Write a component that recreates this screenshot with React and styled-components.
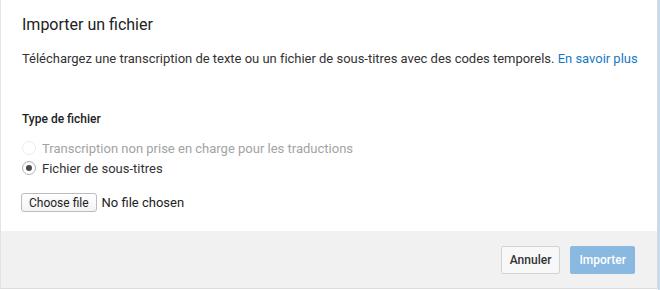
import React from 'react'
import styled, { createGlobalStyle } from 'styled-components'

const GlobalStyle = createGlobalStyle`
  html, body {
    margin: 0;
    padding: 0;
    background: #fff;
  }
  body {
    font-family: Roboto, "Liberation Sans", Arial, sans-serif;
    color: #333;
  }
`

const Frame = styled.div`
  width: 660px;
  height: 290px;
  box-sizing: border-box;
  border-right: 2px solid #c4dcf2;
`

const Dialog = styled.div`
  width: 658px;
  height: 289px;
  box-sizing: border-box;
  border-left: 1px solid #e3e3e3;
  border-right: 1px solid #d9d9d9;
  border-bottom: 1px solid #dcdcdc;
  display: flex;
  flex-direction: column;
`

const Body = styled.div`
  flex: 0 0 231px;
  box-sizing: border-box;
  padding: 15px 21px 0;
  background: #fff;
`

const Title = styled.h2`
  margin: 0;
  font-size: 16px;
  line-height: 20px;
  font-weight: 400;
  color: #222;
`

const Description = styled.p`
  margin: 15px 0 0;
  font-size: 13px;
  line-height: 18px;
  letter-spacing: -0.02px;
  color: #333;
  white-space: nowrap;
`

const Link = styled.a`
  color: #167ac6;
  text-decoration: none;
`

const SectionLabel = styled.div`
  margin-top: 43px;
  font-size: 12px;
  line-height: 16px;
  font-weight: 500;
  color: #222;
`

const RadioList = styled.div`
  margin-top: 11px;
  display: flex;
  flex-direction: column;
`

const RadioRow = styled.label`
  display: flex;
  align-items: center;
  height: 20px;
  font-size: 13px;
  color: ${p => (p.disabled ? '#a3a3a3' : '#333')};
`

const RadioCircle = styled.span`
  width: 12px;
  height: 12px;
  margin-right: 6px;
  border-radius: 50%;
  border: 1px solid ${p => (p.disabled ? '#ececec' : '#b3b3b3')};
  background: #fff;
  display: flex;
  align-items: center;
  justify-content: center;
  box-shadow: ${p => (p.disabled ? 'none' : 'inset 0 1px 1px rgba(0,0,0,0.06)')};

  &::after {
    content: '';
    width: 6px;
    height: 6px;
    border-radius: 50%;
    background: ${p => (p.checked ? '#4a4a4a' : 'transparent')};
  }
`

const FileRow = styled.div`
  margin-top: 15px;
  display: flex;
  align-items: center;
  font-size: 13px;
  color: #222;
`

const ChooseButton = styled.button`
  height: 19px;
  padding: 0 7px;
  margin: 0 5px 0 -1px;
  font-family: inherit;
  font-size: 12px;
  color: #222;
  background: linear-gradient(#fff, #f3f3f3);
  border: 1px solid #bcbcbc;
  border-radius: 3px;
`

const Footer = styled.div`
  flex: 1;
  background: #f1f1f1;
  display: flex;
  align-items: center;
  justify-content: flex-end;
  gap: 10px;
  padding-right: 22px;
`

const Button = styled.button`
  height: 28px;
  padding: 0 8px;
  font-family: inherit;
  font-size: 12px;
  font-weight: 500;
  border-radius: 2px;
  border: 1px solid ${p => (p.primary ? '#89b8e0' : '#d3d3d3')};
  background: ${p => (p.primary ? '#89b8e0' : '#f8f8f8')};
  color: ${p => (p.primary ? '#fff' : '#333')};
`

export default function App() {
  return (
    <>
      <GlobalStyle />
      <Frame>
        <Dialog>
          <Body>
            <Title>Importer un fichier</Title>
            <Description>
              Téléchargez une transcription de texte ou un fichier de sous-titres avec des codes temporels.{' '}
              <Link href="#">En savoir plus</Link>
            </Description>
            <SectionLabel>Type de fichier</SectionLabel>
            <RadioList>
              <RadioRow disabled>
                <RadioCircle disabled />
                Transcription non prise en charge pour les traductions
              </RadioRow>
              <RadioRow>
                <RadioCircle checked />
                Fichier de sous-titres
              </RadioRow>
            </RadioList>
            <FileRow>
              <ChooseButton>Choose file</ChooseButton>
              No file chosen
            </FileRow>
          </Body>
          <Footer>
            <Button>Annuler</Button>
            <Button primary>Importer</Button>
          </Footer>
        </Dialog>
      </Frame>
    </>
  )
}
